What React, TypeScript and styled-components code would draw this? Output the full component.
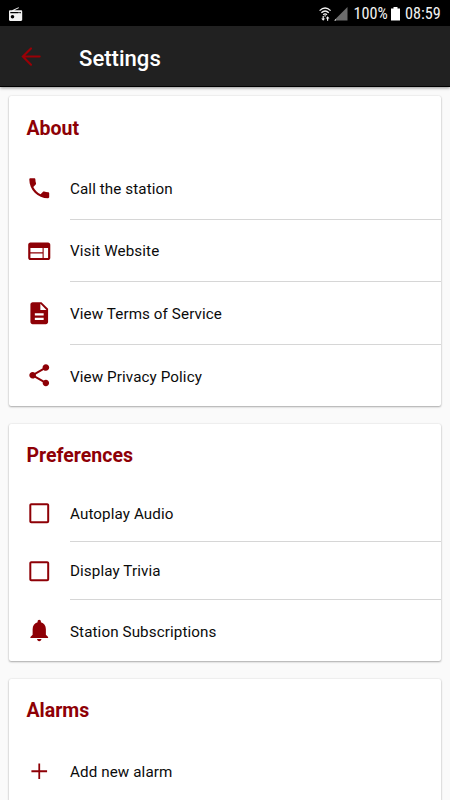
import React from 'react';
import styled, { createGlobalStyle } from 'styled-components';

const GlobalStyle = createGlobalStyle`
  * { box-sizing: border-box; }
  html, body { margin: 0; height: 100%; overflow: hidden; background: #fafafa; }
  body { font-family: Roboto, "Liberation Sans", sans-serif; color: #0b0b0b; }
`;

const Screen = styled.div`
  height: 800px;
  overflow: hidden;
  background: #fafafa;
`;

const StatusBar = styled.div`
  height: 26px;
  padding: 2px 10px 0 8px;
  display: flex;
  align-items: center;
  background: #000;
  color: #f2f2f2;
`;

const StatusItems = styled.div`
  margin-left: auto;
  display: flex;
  align-items: center;
`;

const BatteryIcon = styled.svg`
  display: block;
  flex: none;
  margin-right: 5px;
`;

const StatusText = styled.span<{ $width: number }>`
  width: ${(p) => p.$width}px;
  font-family: "Roboto Condensed", Roboto, sans-serif;
  font-size: 16.2px;
  line-height: 20px;
  white-space: nowrap;
`;

const Toolbar = styled.header`
  height: 61px;
  padding: 0 18px;
  display: flex;
  align-items: center;
  background: #212121;
  border-bottom: 1px solid #000;
  box-shadow: 0 1px 3px rgba(0, 0, 0, 0.42);
`;

const Title = styled.h1`
  margin: 3px 0 0 35px;
  font-size: 22.1px;
  line-height: 28px;
  font-weight: 500;
  color: #fff;
`;

const Content = styled.main`
  padding: 9px 9px 0;
  display: flex;
  flex-direction: column;
  gap: 17.5px;
`;

const Card = styled.section`
  flex: none;
  background: #fff;
  border-radius: 2px;
  box-shadow: 0 1px 2px rgba(0, 0, 0, 0.3), 0 0 2px rgba(0, 0, 0, 0.12);
`;

const Heading = styled.h2`
  margin: 0;
  height: 61px;
  padding: 20.5px 0 0 17.5px;
  font-size: 19.5px;
  line-height: 24px;
  font-weight: 700;
  color: #8e0006;
`;

const Row = styled.div<{ $height: number }>`
  height: ${(p) => p.$height}px;
  padding-left: 17px;
  display: flex;
  align-items: center;
  color: #8e0006;
`;

const Label = styled.div<{ $divided?: boolean }>`
  flex: 1;
  height: 100%;
  margin-left: 17.5px;
  display: flex;
  align-items: center;
  padding-top: ${(p) => (p.$divided ? 2.4 : 3)}px;
  font-size: 15.2px;
  letter-spacing: 0.1px;
  color: #0b0b0b;
  border-bottom: ${(p) => (p.$divided ? '1px solid #d6d6d6' : '0')};
`;

const Svg = styled.svg`
  display: block;
  flex: none;
  fill: currentColor;
`;

const SignalIcon = styled(Svg)`
  margin-right: 5px;
`;

const BackArrow = styled(Svg)`
  color: #9a0006;
  fill: none;
  stroke: currentColor;
  stroke-width: 1.95;
  stroke-linecap: round;
`;

type IconName = 'phone' | 'web' | 'doc' | 'share' | 'box' | 'bell' | 'plus';

const paths: Record<IconName, string> = {
  phone:
    'M6.62 10.79c1.44 2.83 3.76 5.14 6.59 6.59l2.2-2.2c.27-.27.67-.36 1.02-.24 1.12.37 2.33.57 3.57.57.55 0 1 .45 1 1V20c0 .55-.45 1-1 1-9.39 0-17-7.61-17-17 0-.55.45-1 1-1h3.5c.55 0 1 .45 1 1 0 1.25.2 2.45.57 3.57.11.35.03.74-.25 1.02l-2.2 2.2z',
  web: 'M20 4H4c-1.1 0-2 .9-2 2v12c0 1.1.9 2 2 2h16c1.1 0 2-.9 2-2V6c0-1.1-.9-2-2-2zm-5 14H4v-4h11v4zm0-5H4V9h11v4zm5 5h-4V9h4v9z',
  doc: 'M14 2H6c-1.1 0-2 .9-2 2v16c0 1.1.9 2 2 2h12c1.1 0 2-.9 2-2V8l-6-6zm2 16H8v-2h8v2zm0-4H8v-2h8v2zm-3-5V3.5L18.5 9H13z',
  share:
    'M18 16.08c-.76 0-1.44.3-1.96.77L8.91 12.7c.05-.23.09-.46.09-.7s-.04-.47-.09-.7l7.05-4.11c.54.5 1.25.81 2.04.81 1.66 0 3-1.34 3-3s-1.34-3-3-3-3 1.34-3 3c0 .24.04.47.09.7L8.04 9.81C7.5 9.31 6.79 9 6 9c-1.66 0-3 1.34-3 3s1.34 3 3 3c.79 0 1.5-.31 2.04-.81l7.12 4.16c-.05.21-.08.43-.08.65 0 1.61 1.31 2.92 2.92 2.92s2.92-1.31 2.92-2.92-1.31-2.92-2.92-2.92z',
  box: 'M19.2 4.8v14.4H4.8V4.8h14.4M19.2 3H4.8C3.8 3 3 3.8 3 4.8v14.4c0 1 .8 1.8 1.8 1.8h14.4c1 0 1.8-.8 1.8-1.8V4.8c0-1-.8-1.8-1.8-1.8z',
  bell: 'M12 22c1.1 0 2-.9 2-2h-4c0 1.1.9 2 2 2zm6-6v-5c0-3.07-1.63-5.64-4.5-6.32V4c0-.83-.67-1.5-1.5-1.5s-1.5.67-1.5 1.5v.68C7.64 5.36 6 7.92 6 11v5l-2 2v1h16v-1l-2-2z',
  plus: 'M11.2 4.9h1.6v6.3h6.3v1.6h-6.3v6.3h-1.6v-6.3H4.9v-1.6h6.3z',
};

const Icon = ({ name }: { name: IconName }) => (
  <Svg width="26.5" height="26.5" viewBox="0 0 24 24">
    <path d={paths[name]} />
  </Svg>
);

interface Item {
  icon: IconName;
  text: string;
  height: number;
}

const sections: { title: string; items: Item[] }[] = [
  {
    title: 'About',
    items: [
      { icon: 'phone', text: 'Call the station', height: 62.5 },
      { icon: 'web', text: 'Visit Website', height: 62.5 },
      { icon: 'doc', text: 'View Terms of Service', height: 62.5 },
      { icon: 'share', text: 'View Privacy Policy', height: 61.5 },
    ],
  },
  {
    title: 'Preferences',
    items: [
      { icon: 'box', text: 'Autoplay Audio', height: 57.5 },
      { icon: 'box', text: 'Display Trivia', height: 57.5 },
      { icon: 'bell', text: 'Station Subscriptions', height: 61.5 },
    ],
  },
  {
    title: 'Alarms',
    items: [{ icon: 'plus', text: 'Add new alarm', height: 62.5 }],
  },
];

export default function App() {
  return (
    <Screen>
      <GlobalStyle />
      <StatusBar>
        <Svg width="15" height="15" viewBox="0 0 15 15">
          <path
            d="M4 3.2 10.6.2l.4.9-4.600 2.100H13c.7 0 1.200.5 1.200 1.200v8.400c0 .7-.5 1.200-1.200 1.200H2.200c-.7 0-1.200-.5-1.200-1.200V4.400c0-.7.5-1.200 1.200-1.200zM2.300 5v1.300h8.200V5.600h1v.7h1.300V5zM4.500 8a1.800 1.800 0 1 0 0 3.600A1.800 1.800 0 0 0 4.500 8z"
            fillRule="evenodd"
          />
        </Svg>
        <StatusItems>
          <Svg width="13" height="15" viewBox="0 0 13 15">
            <g fill="none" stroke="currentColor" strokeWidth="1.3">
              <path d="M.6 3.600Q6.100-1.700 11.600 3.600M2.400 5.700Q6.100 2.200 9.800 5.700M4.200 7.700Q6.100 6 8 7.700" />
            </g>
            <path d="M5.600 7.800h1v2h-1zM3.600 9h1.200v2.500h1.300l-1.900 2.200-1.900-2.200h1.300zM8 13.700v-2.200H6.700l1.900-2.200 1.900 2.200H9.200v2.200z" />
          </Svg>
          <SignalIcon width="17" height="15" viewBox="0 0 17 15">
            <path d="M15.500 0v13.500H2z" fill="#6c6c6c" />
            <path d="M4 12v1.500H2.300z" />
          </SignalIcon>
          <StatusText $width={37.5}>100%</StatusText>
          <BatteryIcon width="9" height="14" viewBox="0 0 9 14">
            <path d="M2.500 0h4v1.500H9v12H0v-12h2.500z" fill="#fff" />
          </BatteryIcon>
          <StatusText $width={35}>08:59</StatusText>
        </StatusItems>
      </StatusBar>
      <Toolbar>
        <BackArrow width="26" height="26" viewBox="0 0 24 24">
          <path d="M20 12.500H5M12 5l-7.500 7.500L12 20" />
        </BackArrow>
        <Title>Settings</Title>
      </Toolbar>
      <Content>
        {sections.map(({ title, items }) => (
          <Card key={title}>
            <Heading>{title}</Heading>
            {items.map((item, i) => (
              <Row key={item.text} $height={item.height}>
                <Icon name={item.icon} />
                <Label $divided={i < items.length - 1}>{item.text}</Label>
              </Row>
            ))}
          </Card>
        ))}
      </Content>
    </Screen>
  );
}
